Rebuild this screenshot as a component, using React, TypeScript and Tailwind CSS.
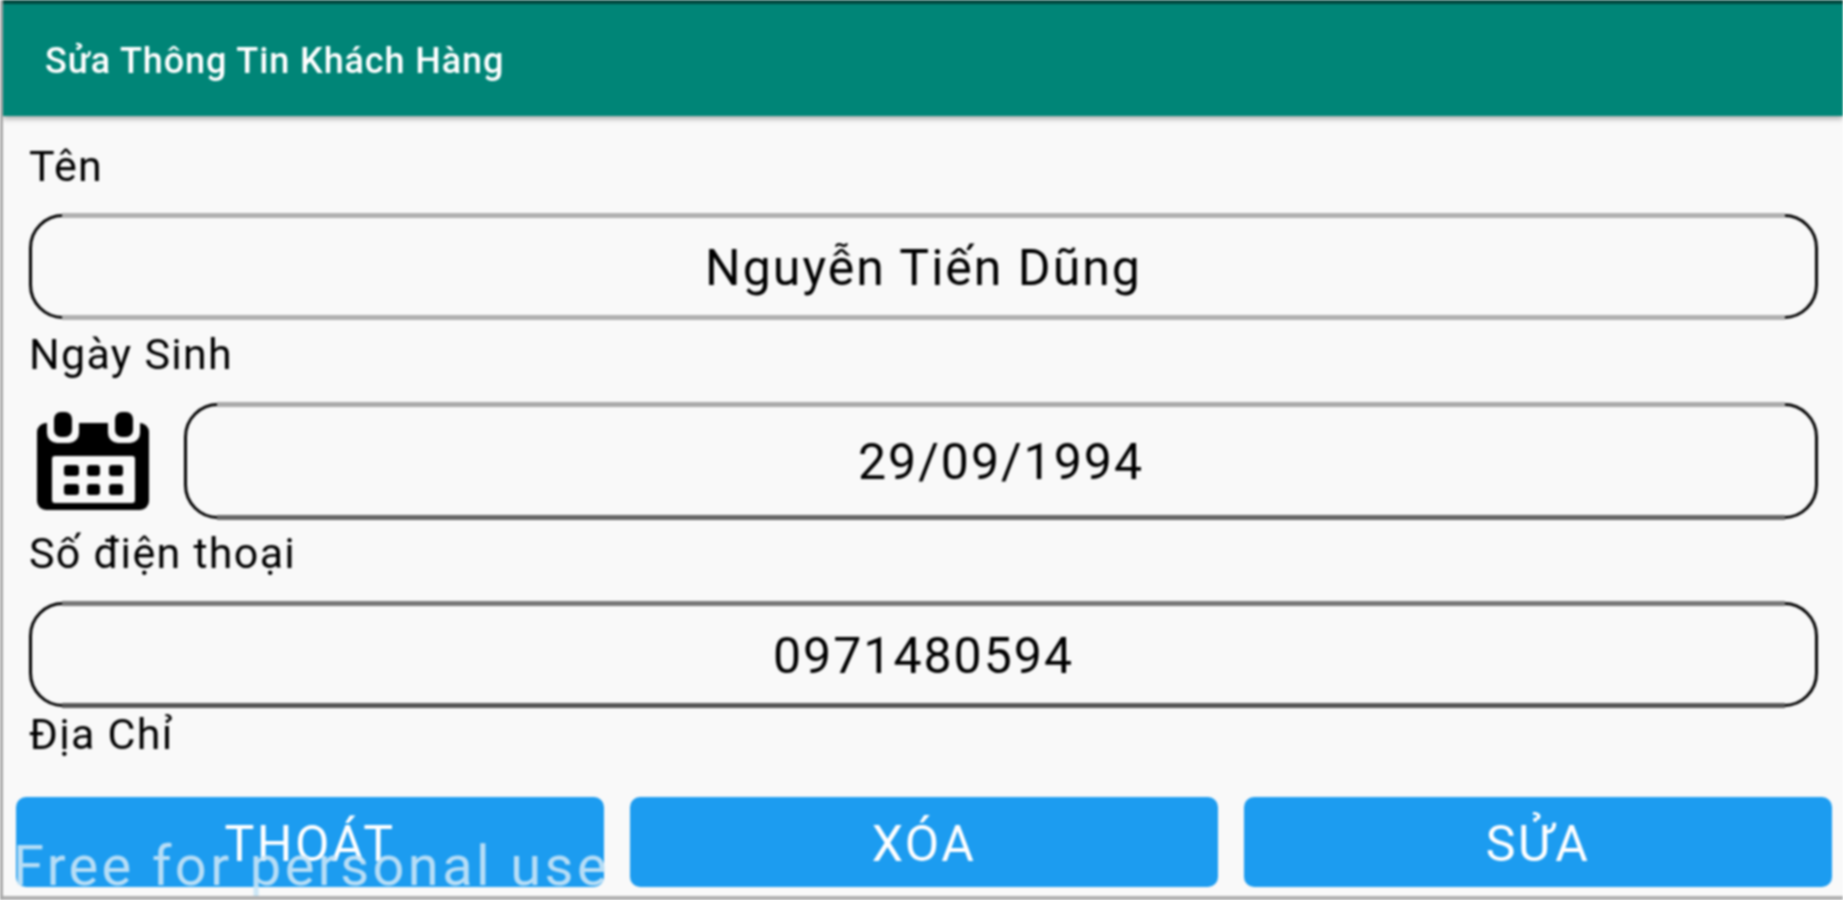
function CalendarIcon() {
  return (
    <svg width="112" height="98" viewBox="0 0 112 98" className="shrink-0">
      <rect x="0" y="11" width="112" height="87" rx="9" fill="#000" />
      <rect x="10" y="0" width="32" height="31" rx="10" fill="#f9f9f9" />
      <rect x="71" y="0" width="32" height="31" rx="10" fill="#f9f9f9" />
      <rect x="10" y="0" width="32" height="11" fill="#f9f9f9" />
      <rect x="71" y="0" width="32" height="11" fill="#f9f9f9" />
      <rect x="17" y="0" width="18" height="25" rx="7" fill="#000" />
      <rect x="78" y="0" width="18" height="25" rx="7" fill="#000" />
      <rect x="15" y="44" width="83" height="47" rx="3" fill="#f9f9f9" />
      <rect x="27" y="53" width="15" height="11" rx="3" fill="#000" />
      <rect x="50" y="53" width="13" height="11" rx="3" fill="#000" />
      <rect x="72" y="53" width="14" height="11" rx="3" fill="#000" />
      <rect x="27" y="72" width="15" height="11" rx="3" fill="#000" />
      <rect x="50" y="72" width="13" height="11" rx="3" fill="#000" />
      <rect x="72" y="72" width="14" height="11" rx="3" fill="#000" />
    </svg>
  )
}

type FieldProps = {
  value: string
  className: string
  topLine: string
  bottomLine: string
}

// the straight top and bottom edges are grey in the picture, the curved ends black
function Field({ value, className, topLine, bottomLine }: FieldProps) {
  return (
    <div
      className={`relative flex items-center justify-center rounded-[34px] border-[3px] border-black pt-[3px] text-[50px] tracking-[2px] text-black ${className}`}
    >
      <span className={`absolute left-[30px] right-[30px] top-[-4px] h-[5px] ${topLine}`} />
      {value}
      <span className={`absolute bottom-[-4px] left-[30px] right-[30px] h-[5px] ${bottomLine}`} />
    </div>
  )
}

function Label({ text, className }: { text: string; className: string }) {
  return <div className={`pl-[26px] text-[43px] leading-[40px] tracking-[1.3px] text-black ${className}`}>{text}</div>
}

function ActionButton({ text }: { text: string }) {
  return (
    <button
      type="button"
      className="flex h-[90px] flex-1 items-center justify-center rounded-[10px] bg-[#1c9cf0] pt-[5px] text-[50px] tracking-[2.5px] text-white"
    >
      {text}
    </button>
  )
}

export default function App() {
  return (
    <div className="relative flex h-[900px] w-[1843px] flex-col overflow-hidden border-l-[3px] border-l-[#a8a8a8] bg-[#f9f9f9] font-['Roboto',sans-serif] blur-[1px]">
      <div className="h-[4px] bg-[#00493f]" />
      <header className="flex h-[112px] items-center bg-[#008577] pl-[42px] pt-[2px] text-[36px] font-medium tracking-[0.9px] text-white shadow-[0_3px_5px_rgba(0,0,0,0.3)]">
        Sửa Thông Tin Khách Hàng
      </header>

      <Label text="Tên" className="mt-[30px]" />
      <div className="mt-[28px] pl-[26px] pr-[25px]">
        <Field value="Nguyễn Tiến Dũng" className="h-[105px]" topLine="bg-[#b0b0b0]" bottomLine="bg-[#b0b0b0]" />
      </div>

      <Label text="Ngày Sinh" className="mt-[15px]" />
      <div className="mt-[29px] flex items-center pl-[34px] pr-[25px]">
        <CalendarIcon />
        <Field value="29/09/1994" className="ml-[35px] h-[116px] flex-1" topLine="bg-[#aaaaaa]" bottomLine="bg-[#666666]" />
      </div>

      <Label text="Số điện thoại" className="mt-[14px]" />
      <div className="mt-[29px] pl-[26px] pr-[25px]">
        <Field value="0971480594" className="h-[105px]" topLine="bg-[#777777]" bottomLine="bg-[#555555]" />
      </div>

      <Label text="Địa Chỉ" className="mt-[7px]" />

      <div className="mt-[43px] flex gap-[26px] pl-[13px] pr-[11px]">
        <ActionButton text="THOÁT" />
        <ActionButton text="XÓA" />
        <ActionButton text="SỬA" />
      </div>

      <div className="absolute bottom-0 left-0 right-0 h-[4px] bg-[#b0b0b0]" />
      <div className="absolute left-[10px] top-[836px] text-[56px] leading-[60px] tracking-[3.4px] text-[#c8e4f6]/90">
        Free for personal use
      </div>
    </div>
  )
}
